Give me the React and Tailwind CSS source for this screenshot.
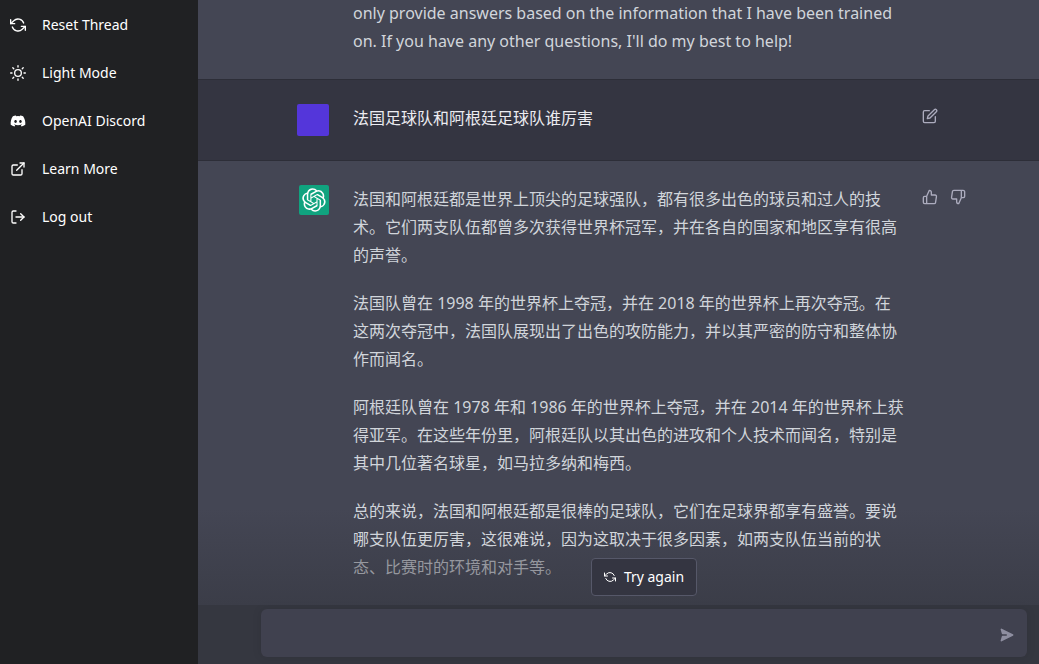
import React from "react";
import { FiRefreshCcw, FiSun, FiExternalLink, FiLogOut, FiEdit, FiThumbsUp, FiThumbsDown } from "react-icons/fi";
import { FaDiscord } from "react-icons/fa";

const links = [
  { label: "Reset Thread", Icon: FiRefreshCcw },
  { label: "Light Mode", Icon: FiSun },
  { label: "OpenAI Discord", Icon: FaDiscord },
  { label: "Learn More", Icon: FiExternalLink },
  { label: "Log out", Icon: FiLogOut },
];

function Logo() {
  return (
    <svg viewBox="0 0 41 41" className="size-6" fill="currentColor" aria-hidden="true">
      <path d="M37.532 16.87a9.963 9.963 0 0 0-.856-8.184 10.078 10.078 0 0 0-10.855-4.835A9.964 9.964 0 0 0 18.306.5a10.079 10.079 0 0 0-9.614 6.977 9.967 9.967 0 0 0-6.664 4.834 10.08 10.08 0 0 0 1.24 11.817 9.965 9.965 0 0 0 .856 8.185 10.079 10.079 0 0 0 10.855 4.835 9.965 9.965 0 0 0 7.516 3.35 10.078 10.078 0 0 0 9.617-6.981 9.967 9.967 0 0 0 6.663-4.834 10.079 10.079 0 0 0-1.243-11.813ZM22.498 37.886a7.474 7.474 0 0 1-4.799-1.735c.061-.033.168-.091.237-.134l7.964-4.6a1.294 1.294 0 0 0 .655-1.134V19.054l3.366 1.944a.12.12 0 0 1 .066.092v9.299a7.505 7.505 0 0 1-7.49 7.496ZM6.392 31.006a7.471 7.471 0 0 1-.894-5.023c.06.036.162.099.237.141l7.964 4.6a1.297 1.297 0 0 0 1.308 0l9.724-5.614v3.888a.12.12 0 0 1-.048.103l-8.051 4.649a7.504 7.504 0 0 1-10.24-2.744ZM4.297 13.62A7.469 7.469 0 0 1 8.2 10.333c0 .068-.004.19-.004.274v9.201a1.294 1.294 0 0 0 .654 1.132l9.723 5.614-3.366 1.944a.12.12 0 0 1-.114.01L7.04 23.856a7.504 7.504 0 0 1-2.743-10.237Zm27.658 6.437-9.724-5.615 3.367-1.943a.121.121 0 0 1 .113-.01l8.052 4.648a7.498 7.498 0 0 1-1.158 13.528v-9.476a1.293 1.293 0 0 0-.65-1.132Zm3.35-5.043a7.77 7.77 0 0 0-.236-.141l-7.965-4.6a1.298 1.298 0 0 0-1.308 0l-9.723 5.614v-3.888a.12.12 0 0 1 .048-.103l8.05-4.645a7.497 7.497 0 0 1 11.135 7.763Zm-21.063 6.929-3.367-1.944a.12.12 0 0 1-.065-.092v-9.299a7.497 7.497 0 0 1 12.293-5.756 6.94 6.94 0 0 0-.236.134l-7.965 4.6a1.294 1.294 0 0 0-.654 1.132l-.006 11.225Zm1.829-3.943 4.33-2.501 4.332 2.5v5l-4.331 2.5-4.331-2.5V18Z" />
    </svg>
  );
}

function PaperPlane() {
  return (
    <svg viewBox="0 0 20 20" className="size-4 rotate-90" fill="currentColor" aria-hidden="true">
      <path d="M10.894 2.553a1 1 0 00-1.788 0l-7 14a1 1 0 001.169 1.409l5-1.429A1 1 0 009 15.571V11a1 1 0 112 0v4.571a1 1 0 00.725.962l5 1.428a1 1 0 001.17-1.408l-7-14z" />
    </svg>
  );
}

function Message({ avatar, actions, children, className }) {
  return (
    <article className={`border-b border-[#2d2e38] px-6 ${className}`}>
      <div className="mx-auto flex max-w-[643px]">
        <div className="mr-6 flex w-8 shrink-0 justify-end">{avatar}</div>
        <div className="relative z-10 min-w-0 flex-1 space-y-5">{children}</div>
        <div className="ml-3 flex w-[22px] shrink-0 items-start gap-1 text-[#acacbe]">{actions}</div>
      </div>
    </article>
  );
}

function IconButton({ label, Icon }) {
  return (
    <button type="button" aria-label={label} className="shrink-0 rounded-md p-1">
      <Icon className="size-4" />
    </button>
  );
}

export default function App() {
  return (
    <div className="flex h-screen overflow-hidden bg-[#444654] font-['Noto_Sans','Noto_Sans_CJK_SC',sans-serif]">
      <nav className="flex w-[198px] shrink-0 flex-col gap-1 bg-[#202123] pt-[3px]">
        {links.map(({ label, Icon }) => (
          <a key={label} href="#" className="flex h-11 items-center gap-4 px-2.5 text-sm text-white">
            <Icon className="size-4 shrink-0" />
            {label}
          </a>
        ))}
      </nav>

      <main className="flex min-w-0 flex-1 flex-col">
        <div className="relative min-h-0 flex-1 overflow-hidden text-base leading-7 text-[#d1d5db]">
          <Message className="-mt-px pb-6">
            <p>
              only provide answers based on the information that I have been trained on. If you have any other
              questions, I'll do my best to help!
            </p>
          </Message>

          <Message
            className="bg-[#343541] py-6 text-[#ececf1]"
            avatar={<div className="size-8 rounded-xs bg-[#5436da]" />}
            actions={<IconButton label="Edit" Icon={FiEdit} />}
          >
            <p>法国足球队和阿根廷足球队谁厉害</p>
          </Message>

          <Message
            className="py-6"
            avatar={
              <div className="flex size-[30px] items-center justify-center rounded-xs bg-[#10a37f] text-white">
                <Logo />
              </div>
            }
            actions={
              <>
                <IconButton label="Good response" Icon={FiThumbsUp} />
                <IconButton label="Bad response" Icon={FiThumbsDown} />
              </>
            }
          >
            <p>
              法国和阿根廷都是世界上顶尖的足球强队，都有很多出色的球员和过人的技术。它们两支队伍都曾多次获得世界杯冠军，并在各自的国家和地区享有很高的声誉。
            </p>
            <p>
              法国队曾在 1998 年的世界杯上夺冠，并在 2018 年的世界杯上再次夺冠。在这两次夺冠中，法国队展现出了出色的攻防能力，并以其严密的防守和整体协作而闻名。
            </p>
            <p>
              阿根廷队曾在 1978 年和 1986 年的世界杯上夺冠，并在 2014 年的世界杯上获得亚军。在这些年份里，阿根廷队以其出色的进攻和个人技术而闻名，特别是其中几位著名球星，如马拉多纳和梅西。
            </p>
            <p>
              总的来说，法国和阿根廷都是很棒的足球队，它们在足球界都享有盛誉。要说哪支队伍更厉害，这很难说，因为这取决于很多因素，如两支队伍当前的状
              <span className="text-[#96989f]">态、比赛时的环境和对手等。</span>
            </p>
          </Message>

          <div className="absolute inset-x-0 bottom-0 h-24 bg-linear-to-b from-[#353740]/0 to-[#353740]/60" />
          <div className="absolute inset-x-0 bottom-0 z-20 flex justify-center pr-3 pb-[9px] pl-[63px]">
            <button
              type="button"
              className="flex h-[38px] items-center gap-2 rounded border border-[#565869] bg-[#343541] px-3 text-sm text-white"
            >
              <FiRefreshCcw className="size-3" />
              Try again
            </button>
          </div>
        </div>

        <form className="bg-[#353740] pt-1 pr-3 pb-[7px] pl-[63px]" onSubmit={(e) => e.preventDefault()}>
          <div className="flex h-12 items-center rounded-md bg-[#40414f] pr-3 pl-4 shadow-[0_0_10px_rgba(0,0,0,0.1)]">
            <input
              type="text"
              aria-label="Message"
              className="min-w-0 flex-1 bg-transparent text-base text-white outline-none"
            />
            <button type="submit" aria-label="Send message" className="pt-1 text-[#8e8ea0]">
              <PaperPlane />
            </button>
          </div>
        </form>
      </main>
    </div>
  );
}
